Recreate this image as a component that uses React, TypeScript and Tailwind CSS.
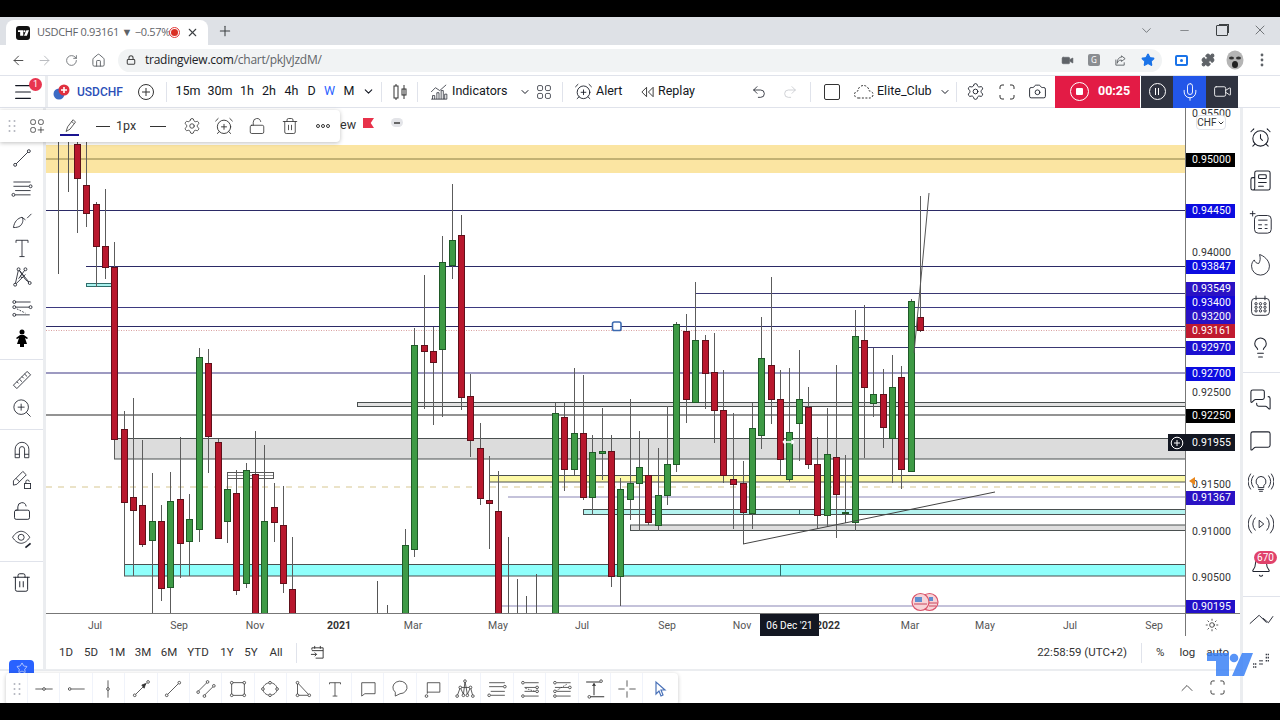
import type { ReactNode } from "react";
import {
  AlarmClock, AlarmClockPlus, ArrowLeft, ArrowRight, Camera, ChevronDown, ChevronUp, Home,
  Lightbulb, Lock, LockOpen, Menu, MessageSquare, MessagesSquare, Minus, Newspaper, Plus, Puzzle, Redo2,
  RotateCw, Settings, Star, Sun, Trash2, Undo2, Video, X, Mic, Bell,
} from "lucide-react";

const tvFont = "font-['Roboto','Liberation_Sans',sans-serif]";

// [x, wickTop, bodyTop, bodyBottom, wickBottom, colour]
type Candle = [number, number, number, number, number, "r" | "g"];
const candles: Candle[] = [
  [77, 140, 144, 178, 233, "r"], [86, 140, 185, 213, 227, "r"], [96, 202, 204, 246, 287, "r"], [105, 189, 246, 267, 279, "r"],
  [114, 242, 267, 439, 459, "r"], [124, 411, 429, 502, 576, "r"], [133, 398, 497, 510, 576, "r"], [142, 440, 505, 544, 547, "r"],
  [152, 473, 521, 540, 614, "g"], [161, 505, 521, 588, 601, "r"], [170, 472, 501, 587, 614, "g"], [180, 437, 499, 543, 578, "r"],
  [189, 494, 519, 541, 576, "g"], [199, 348, 357, 529, 542, "g"], [208, 349, 363, 436, 473, "r"], [218, 439, 442, 538, 538, "r"],
  [227, 473, 489, 521, 543, "g"], [236, 470, 493, 590, 595, "r"], [246, 463, 470, 583, 588, "g"], [255, 431, 474, 620, 620, "r"],
  [264, 445, 521, 620, 620, "g"], [274, 483, 507, 522, 542, "r"], [283, 486, 525, 583, 593, "r"], [292, 537, 589, 620, 620, "r"],
  [405, 529, 545, 620, 620, "g"], [414, 328, 345, 549, 557, "g"], [424, 275, 345, 351, 409, "r"], [433, 327, 351, 362, 425, "r"],
  [442, 236, 262, 349, 417, "g"], [452, 184, 240, 265, 279, "g"], [461, 215, 235, 397, 410, "r"], [470, 374, 396, 440, 457, "r"],
  [480, 423, 448, 498, 505, "r"], [489, 456, 500, 503, 549, "r"], [498, 471, 511, 620, 620, "r"], [555, 403, 413, 620, 620, "g"],
  [564, 403, 417, 469, 491, "r"], [574, 368, 433, 469, 475, "g"], [583, 375, 433, 497, 500, "r"], [592, 435, 452, 497, 515, "g"],
  [602, 408, 451, 453, 480, "g"], [611, 435, 451, 576, 587, "r"], [620, 478, 489, 576, 606, "g"], [630, 399, 483, 499, 520, "g"],
  [639, 431, 467, 483, 531, "g"], [648, 438, 475, 522, 525, "r"], [658, 448, 495, 525, 531, "g"], [667, 406, 464, 495, 505, "g"],
  [676, 322, 324, 464, 472, "g"], [686, 314, 331, 399, 423, "r"], [695, 282, 340, 402, 402, "g"], [705, 335, 340, 373, 409, "r"],
  [714, 333, 372, 410, 443, "r"], [723, 370, 410, 475, 483, "r"], [733, 413, 479, 484, 529, "r"], [743, 461, 483, 512, 544, "r"],
  [752, 403, 428, 513, 529, "g"], [761, 317, 358, 435, 449, "g"], [771, 277, 365, 399, 424, "r"], [780, 370, 399, 459, 476, "r"],
  [789, 368, 432, 479, 482, "g"], [799, 350, 399, 423, 461, "g"], [808, 387, 407, 464, 469, "r"], [817, 437, 464, 515, 529, "r"],
  [827, 408, 454, 515, 527, "g"], [836, 365, 457, 494, 538, "r"], [845, 455, 512, 513, 523, "g"], [855, 310, 336, 522, 531, "g"],
  [864, 305, 340, 387, 458, "r"], [873, 348, 394, 403, 417, "g"], [883, 369, 394, 427, 448, "r"], [892, 355, 387, 438, 483, "g"],
  [901, 366, 377, 469, 489, "r"], [911, 299, 301, 471, 472, "g"], [920, 196, 317, 330, 332, "r"],
];
const strayWicks: [number, number, number][] = [
  [58, 140, 274], [68, 140, 192], [377, 581, 614], [387, 605, 614], [508, 537, 614], [517, 579, 614], [526, 596, 614], [536, 574, 614],
];

// [y, x start, colour]
const levels: [number, number, string][] = [
  [210.5, 46, "#2b2a66"], [266.5, 86, "#2b2a66"], [293.5, 695, "#3a3872"], [307.5, 46, "#3d3a80"], [326.5, 46, "#2b2a66"],
  [347.5, 858, "#3a3872"], [373, 46, "#7d78ad"], [415, 46, "#6f6f6f"], [497, 508, "#8985b5"], [606, 498, "#8985b5"],
];

// [y, x start, bottom y, fill]
const bands: [number, number, number, string][] = [
  [402.5, 357, 406.5, "#e2e2e2"], [438.5, 114, 459, "#dcdcdc"], [475.5, 489, 482, "#fdf9a6"],
  [509.5, 583, 514.5, "#b4f3ef"], [525, 630, 530.5, "#dedede"], [564.5, 124, 576, "#8ffffb"],
];

function Chart() {
  return (
    <svg viewBox="46 108 1139 505" className="block w-[1139px] h-[505px]">
      <rect x="46" y="145" width="1139" height="28" fill="#fbe5a2" />
      <line x1="46" x2="1185" y1="159" y2="159" stroke="#8b7f45" />
      {bands.map(([y, x, bottom, fill]) => (
        <rect key={y} x={x + 0.5} y={y} width={1190 - x} height={bottom - y} fill={fill} stroke="#4a5050" strokeWidth="1" />
      ))}
      {levels.map(([y, x, c]) => (
        <line key={y} x1={x} x2="1185" y1={y} y2={y} stroke={c} strokeWidth={c === "#7d78ad" || c === "#6f6f6f" ? 1.4 : 1} />
      ))}
      <line x1="46" x2="1185" y1="330.5" y2="330.5" stroke="#d9a0a0" strokeDasharray="1 1.5" />
      <line x1="46" x2="1185" y1="487" y2="487" stroke="#d8c892" strokeWidth="1.2" strokeDasharray="6 6" />
      <rect x="86.5" y="283.5" width="25" height="3" fill="#a9f2ee" stroke="#2f6d6b" />
      <rect x="227.5" y="472.5" width="46" height="6" fill="#ffffff" stroke="#555555" />
      <line x1="227" x2="273" y1="475.5" y2="475.5" stroke="#999999" />
      <line x1="780.5" x2="780.5" y1="565" y2="576" stroke="#2f6d6b" />
      <line x1="799.5" x2="799.5" y1="510" y2="515" stroke="#2f6d6b" />
      <line x1="855.5" x2="855.5" y1="525" y2="531" stroke="#333333" />
      {strayWicks.map(([x, top, bottom]) => (
        <line key={x} x1={x + 0.5} x2={x + 0.5} y1={top} y2={bottom} stroke="#555555" />
      ))}
      {candles.map(([x, top, bodyTop, bodyBottom, bottom, c]) => (
        <g key={x}>
          <line x1={x + 0.5} x2={x + 0.5} y1={top} y2={bottom} stroke="#5c5c5c" />
          <rect
            x={x - 2.5}
            y={bodyTop + 0.5}
            width="6"
            height={bodyBottom - bodyTop}
            fill={c === "r" ? "#b8172d" : "#3e9a45"}
            stroke={c === "r" ? "#60101a" : "#1f5a27"}
          />
        </g>
      ))}
      <line x1="929" y1="193" x2="914" y2="353" stroke="#555555" />
      <line x1="743" y1="544" x2="995" y2="492" stroke="#444444" />
      <rect x="612.5" y="322" width="8.5" height="8.5" rx="1.8" fill="#ffffff" stroke="#3c6ab0" strokeWidth="1.6" />
      {/* crosshair cursor */}
      <path d="M783 442h11M783 442l2.5-2M783 442l2.5 2M794 442l-2.5-2M794 442l-2.5 2" stroke="#ffffff" strokeWidth="1.6" fill="none" />
      {/* event flags */}
      <circle cx="929.500" cy="602" r="8.500" fill="#f7d4d8" stroke="#d9536a" strokeWidth="1.2" />
      <circle cx="920.500" cy="602" r="8.500" fill="#f7d4d8" stroke="#d9536a" strokeWidth="1.2" />
      <rect x="915" y="597" width="7" height="5" fill="#5f8fd0" />
      <rect x="929" y="597" width="4" height="4" fill="#5f8fd0" />
      <path d="M914 604h13M929 603h8M929 606h7" stroke="#c9475c" strokeWidth="1.2" />
    </svg>
  );
}

// price labels sit on the axis at the price they mark
const prices: [number, string, string][] = [
  [113, "0.95500", "plain"], [159, "0.95000", "bg-black"], [210, "0.94450", "bg-[#0c0ce0]"], [252, "0.94000", "plain"],
  [266, "0.93847", "bg-[#0c0ce0]"], [288, "0.93549", "bg-[#2a12c4]"], [302, "0.93400", "bg-[#1408d8]"], [316, "0.93200", "bg-[#2a12c4]"],
  [330, "0.93161", "bg-[#c01a30]"], [347.5, "0.92970", "bg-[#1c10d0]"], [373, "0.92700", "bg-[#0c0ce0]"], [392, "0.92500", "plain"],
  [415, "0.92250", "bg-black"], [484, "0.91500", "plain"], [497, "0.91367", "bg-[#2a12c4]"], [531, "0.91000", "plain"],
  [577, "0.90500", "plain"], [606, "0.90195", "bg-[#2210c8]"],
];

function PriceAxis() {
  return (
    <div className="relative w-[55px] h-full border-l border-[#777777] text-[10.5px] tracking-[0.1px]">
      {prices.map(([y, text, bg]) => (
        <div
          key={text}
          style={{ top: y - 108 - 6.5 }}
          className={`absolute left-0 w-[49px] h-[14px] flex items-center justify-end pr-[4px] ${
            bg === "plain" ? "text-[#333333]" : `${bg} text-white`
          }`}
        >
          {text}
        </div>
      ))}
      <div className="absolute left-[-18px] top-[326px] w-[67px] h-[17px] bg-[#131722] text-white flex items-center justify-end pr-[4px]">
        <svg viewBox="0 0 14 14" className="absolute left-[2px] w-[14px] h-[14px]" fill="none" stroke="#ffffff">
          <circle cx="7" cy="7" r="5.8" />
          <path d="M7 4v6M4 7h6" />
        </svg>
        0.91955
      </div>
      <div className="absolute left-[3px] top-[369px] w-0 h-0 border-y-[4px] border-y-transparent border-r-[6px] border-r-[#e8861c]" />
      <div className="absolute left-[10px] top-[7px] w-[30px] h-[15px] bg-white border border-[#e0e3eb] rounded flex items-center justify-center text-[10px] text-[#333333]">
        CHF
        <ChevronDown size={8} strokeWidth={3} />
      </div>
    </div>
  );
}

const timeLabels: [number, string, boolean][] = [
  [95, "Jul", false], [179, "Sep", false], [255, "Nov", false], [339, "2021", true], [413, "Mar", false], [498, "May", false],
  [582, "Jul", false], [667, "Sep", false], [742, "Nov", false], [828, "2022", true], [910, "Mar", false], [985, "May", false],
  [1070, "Jul", false], [1154, "Sep", false],
];

function TimeAxis() {
  return (
    <div className="relative h-[23px] border-t border-[#777777] shrink-0 text-[10.5px] text-[#555555]">
      {timeLabels.map(([x, text, bold]) => (
        <span
          key={x}
          style={{ left: x - 46 }}
          className={`absolute top-[4px] -translate-x-1/2 ${bold ? "font-bold text-[#333333]" : ""}`}
        >
          {text}
        </span>
      ))}
      <div className="absolute left-[714px] top-0 w-[59px] h-[22px] bg-[#131722] text-white flex items-center justify-center text-[10px]">06 Dec '21</div>
      <div className="absolute left-[1139px] top-[-1px] w-px h-[23px] bg-[#777777]" />
      <Sun size={14} className="absolute left-[1159px] top-[4px] text-[#222222]" strokeWidth={1.3} />
    </div>
  );
}

function Ico({ children, size = 24 }: { children: ReactNode; size?: number }) {
  return (
    <svg viewBox="0 0 28 28" width={size} height={size} fill="none" stroke="currentColor" strokeWidth="1">
      {children}
    </svg>
  );
}

function Dots({ pts }: { pts: [number, number][] }) {
  return (
    <>
      {pts.map(([x, y]) => (
        <circle key={`${x}-${y}`} cx={x} cy={y} r="1.7" fill="#ffffff" />
      ))}
    </>
  );
}

const sideTools: [number, ReactNode][] = [
  [158, <Ico><path d="M7 21 21 7" /><Dots pts={[[6, 22], [22, 6]]} /></Ico>],
  [188, <Ico><path d="M4 7h20M4 12h18M6 17h18M6 22h18" /><Dots pts={[[24, 12], [4, 22]]} /></Ico>],
  [219, <Ico><path d="M4 24c1-7 5-11 10-12 2 3 1 7-2 10-2 1.500-5 2-8 2ZM14 12l4 3M20 13l5-5" /></Ico>],
  [248, <Ico><path d="M7 8V5h14v3M14 5v19M11 24h6" /></Ico>],
  [277, <Ico><path d="M6 23 10 5l8 12 5 4M6 23l12-12M10 5l13 16M10 16l8-11" /><Dots pts={[[6, 23], [10, 5], [18, 5], [23, 21], [14, 13]]} /></Ico>],
  [308, <Ico><path d="M5 7h19M7 13h18M5 22h18" /><path d="M8 15l10 5" strokeDasharray="2 1.500" /><Dots pts={[[5, 7], [24, 13], [5, 13], [5, 22]]} /></Ico>],
  [338, <svg viewBox="0 0 14 18" width="14" height="18" fill="#000000"><circle cx="7" cy="3" r="2.500" /><path d="M1 9l4-3h4l4 3-1 1-2-1 2 6H9v3H5v-3H2l2-6-2 1Z" /></svg>],
  [380, <Ico><path d="m4 20 16-16 4 4L8 24ZM8 16l2 2M11 13l3 3M14 10l2 2M17 7l3 3" /></Ico>],
  [408, <Ico><circle cx="13" cy="13" r="8.500" /><path d="M19 19l5 5M13 9v8M9 13h8" /></Ico>],
  [450, <Ico><path d="M6 23V13a8 8 0 0 1 16 0v10h-5V13a3 3 0 0 0-6 0v10ZM6 19h5M17 19h5" /></Ico>],
  [480, <Ico><path d="m4 15 11-11 4 4L8 19l-4 1ZM7 12l4 4" /><rect x="17" y="18" width="7" height="6" /><path d="M18.500 18v-2a2 2 0 0 1 4 0" /></Ico>],
  [511, <LockOpen size={20} strokeWidth={1.1} />],
  [539, <Ico><path d="M3 12c3-5 7-7 10-7s7 2 10 7c-3 5-7 7-10 7s-7-2-10-7Z" /><circle cx="13" cy="12" r="3.500" /><path d="m18 24 6-5" strokeWidth="2" /></Ico>],
  [582, <Trash2 size={21} strokeWidth={1.1} />],
];

function LeftToolbar() {
  return (
    <div className="relative w-[43px] h-full shrink-0 bg-white text-[#1e222d]">
      {sideTools.map(([y, icon]) => (
        <div key={y} style={{ top: y - 108 - 13 }} className="absolute left-0 w-[43px] h-[26px] flex items-center justify-center">
          {icon}
        </div>
      ))}
      <div className="absolute left-0 top-[251px] w-[43px] h-px bg-[#e0e3eb]" />
      <div className="absolute left-0 top-[321px] w-[43px] h-px bg-[#e0e3eb]" />
      <div className="absolute left-0 top-[453px] w-[43px] h-px bg-[#e0e3eb]" />
    </div>
  );
}

const drawTools: ReactNode[] = [
  <Ico size={22}><path d="M3 14h22" /><Dots pts={[[14, 14]]} /></Ico>,
  <Ico size={22}><path d="M8 14h17" /><Dots pts={[[6, 14]]} /></Ico>,
  <Ico size={22}><path d="M14 3v22" /><Dots pts={[[14, 14]]} /></Ico>,
  <Ico size={22}><path d="M7 21 21 7" /><path d="m15 9 5-2-2 6Z" fill="currentColor" /><Dots pts={[[6, 22], [23, 5]]} /></Ico>,
  <Ico size={22}><path d="M7 21 21 7" /><Dots pts={[[6, 22], [22, 6]]} /></Ico>,
  <Ico size={22}><path d="M4 17 15 6M12 22 23 11" /><Dots pts={[[4, 18], [16, 5], [12, 23], [24, 10]]} /></Ico>,
  <Ico size={22}><rect x="6" y="6" width="16" height="16" /><Dots pts={[[6, 6], [22, 6], [6, 22], [22, 22]]} /></Ico>,
  <Ico size={22}><path d="M14 6c5 0 9 4 9 8s-4 8-9 8-9-4-9-8 4-8 9-8Z" /><Dots pts={[[14, 6], [23, 14], [14, 22], [5, 14]]} /></Ico>,
  <Ico size={22}><path d="M7 6v16h15Z" /><Dots pts={[[7, 6], [7, 22], [22, 22]]} /></Ico>,
  <Ico size={22}><path d="M7 8V6h14v2M14 6v17M11 23h6" /></Ico>,
  <Ico size={22}><path d="M6 23V6h17v14H10Z" /></Ico>,
  <Ico size={22}><path d="M8 23v-5a9 8 0 1 1 6 2Z" /></Ico>,
  <Ico size={22}><path d="M8 20V6h16v12H8" /><Dots pts={[[7, 23]]} /></Ico>,
  <Ico size={22}><path d="M4 23 8 12l4 9 2-17 3 17 4-9 3 11M8 12l13 0" /><Dots pts={[[4, 23], [8, 12], [12, 22], [14, 4], [17, 22], [21, 12], [24, 23]]} /></Ico>,
  <Ico size={22}><path d="M4 6h20M4 11h18M6 17h18M6 22h18" /><Dots pts={[[24, 11], [4, 22]]} /></Ico>,
  <Ico size={22}><path d="M7 6h18M7 12h18M7 17h18M7 23h18" /><path d="m8 13 12 4" strokeDasharray="2 1.500" /><Dots pts={[[5, 6], [23, 12], [5, 23], [23, 17]]} /></Ico>,
  <Ico size={22}><path d="M7 6h18M5 12h18M7 17h18M7 23h18" /><path d="m20 8-13 8" strokeDasharray="2 1.500" /><Dots pts={[[5, 6], [24, 12], [5, 17], [5, 23]]} /></Ico>,
  <Ico size={22}><path d="M4 5h18M9 24h18M14 7v15" strokeWidth="1.300" /><path d="m12 10 2-3 2 3" fill="currentColor" /><Dots pts={[[23, 4], [8, 24]]} /></Ico>,
  <Ico size={22}><path d="M14 3v8M14 17v8M3 14h8M17 14h8" /></Ico>,
  <svg viewBox="0 0 18 18" width="18" height="18" fill="none" stroke="#4a72b8" strokeWidth="1.2"><path d="M5 2v12l3-3 2 5 2-1-2-5h4Z" /></svg>,
];

function DrawBar() {
  return (
    <div className="absolute left-[6px] top-[2px] w-[672px] h-[32px] bg-white rounded shadow-[0_1px_4px_rgba(0,0,0,0.22)] flex items-center text-[#333333] z-10">
      <div className="w-[22px] h-full flex items-center justify-center border-r border-[#f0f3fa]">
        <Grip />
      </div>
      {drawTools.map((icon, i) => (
        <div key={i} className="w-[32.4px] h-full shrink-0 flex items-center justify-center border-r border-[#f0f3fa] last:border-r-0">
          {icon}
        </div>
      ))}
    </div>
  );
}

function Grip() {
  return (
    <svg viewBox="0 0 8 14" width="8" height="14" fill="#b2b5be">
      <circle cx="1.500" cy="2" r="1" /><circle cx="6.500" cy="2" r="1" />
      <circle cx="1.500" cy="7" r="1" /><circle cx="6.500" cy="7" r="1" />
      <circle cx="1.500" cy="12" r="1" /><circle cx="6.500" cy="12" r="1" />
    </svg>
  );
}

function FloatingBar() {
  return (
    <div className="absolute left-0 top-[2px] w-[340px] h-[32px] bg-white rounded-r shadow-[0_1px_4px_rgba(0,0,0,0.25)] flex items-center text-[#333333] z-20 text-[12.5px]">
      <div className="w-[21px] flex justify-center pl-[2px]"><Grip /></div>
      <div className="w-[32px] flex justify-center">
        <Ico size={22}>
          <rect x="6" y="6" width="6" height="6" rx="2" /><rect x="16" y="6" width="6" height="6" rx="2" /><rect x="6" y="16" width="6" height="6" rx="2" />
          <path d="M19 15v8M15 19h8" />
        </Ico>
      </div>
      <div className="relative w-[33px] h-full flex items-center justify-center">
        <Ico size={22}><path d="m9 21 2-6 7-9 3 3-7 9-5 3ZM16 8l3 3" /></Ico>
        <div className="absolute left-[7px] bottom-[6px] w-[19px] h-[2px] bg-[#1a1490]" />
      </div>
      <div className="w-[56px] flex items-center gap-[6px] pl-[10px]">
        <div className="w-[14px] h-px bg-[#333333]" />
        1px
      </div>
      <div className="w-[32px] flex justify-center"><div className="w-[16px] h-px bg-[#333333]" /></div>
      <div className="w-[33px] flex justify-center pl-[2px]"><Settings size={18} strokeWidth={1.1} /></div>
      <div className="w-[33px] flex justify-center"><AlarmClockPlus size={20} strokeWidth={1.1} /></div>
      <div className="w-[33px] flex justify-center"><LockOpen size={18} strokeWidth={1.1} /></div>
      <div className="w-[33px] flex justify-center"><Trash2 size={18} strokeWidth={1.1} /></div>
      <div className="w-[33px] flex justify-center gap-[1px]">
        <span className="w-[4px] h-[4px] rounded-full border border-[#333333]" />
        <span className="w-[4px] h-[4px] rounded-full border border-[#333333]" />
        <span className="w-[4px] h-[4px] rounded-full border border-[#333333]" />
      </div>
    </div>
  );
}

const rightIcons: [number, ReactNode][] = [
  [98, <Ico size={26}><rect x="6" y="5" width="16" height="19" rx="4" /><path d="M10 10h8M10 13h8M10 16h8M10 19h8" /></Ico>],
  [137, <AlarmClock size={23} strokeWidth={1.1} />],
  [180, <Newspaper size={23} strokeWidth={1.1} />],
  [222, <Ico size={26}><rect x="7" y="7" width="18" height="19" rx="4" /><path d="M11 12h10M11 17h4M18 17h3M11 21h4M18 21h3M2 5h6M5 2v6" /></Ico>],
  [263, <Ico size={25}><path d="M13 4c4 1 11 6 11 13a10 10 0 1 1-20 0c0-3 1-5 3-7 1 3 3 4 5 4 2-3 2-6 1-10Z" /></Ico>],
  [305, <Ico size={25}><rect x="4" y="6" width="20" height="19" rx="4" /><path d="M9 3v5M19 3v5" /><circle cx="9" cy="12" r="1.300" /><circle cx="14" cy="12" r="1.300" /><circle cx="19" cy="12" r="1.300" /><circle cx="9" cy="16" r="1.300" /><circle cx="14" cy="16" r="1.300" /><circle cx="19" cy="16" r="1.300" /><circle cx="9" cy="20" r="1.300" /><circle cx="14" cy="20" r="1.300" /><circle cx="19" cy="20" r="1.300" /></Ico>],
  [347, <Lightbulb size={23} strokeWidth={1.1} />],
  [399, <MessagesSquare size={23} strokeWidth={1.1} />],
  [440, <MessageSquare size={23} strokeWidth={1.1} />],
  [482, <Ico size={26}><path d="M14 8a5.500 5.500 0 0 0-3 10v2h6v-2a5.500 5.500 0 0 0-3-10ZM11 22h6M12 24h4M6 7a11 11 0 0 0 0 13M3 5a14 14 0 0 0 0 17M22 7a11 11 0 0 1 0 13M25 5a14 14 0 0 1 0 17" /></Ico>],
  [524, <Ico size={26}><path d="m12 10 5 4-5 4ZM8 7a10 10 0 0 0 0 14M4 4a15 15 0 0 0 0 20M20 7a10 10 0 0 1 0 14M24 4a15 15 0 0 1 0 20" /></Ico>],
  [567, <Bell size={22} strokeWidth={1.1} />],
  [619, <Ico size={26}><path d="M2 19 12 10l8 8M16 13l6 5 5-7" /></Ico>],
  [660, <Ico size={22}><path d="M4 19h4M4 23h4M12 15h4M12 19h4M20 7h5M20 11h5M20 15h5" strokeWidth="2" strokeDasharray="1.500 1" /></Ico>],
];

function RightBar() {
  return (
    <div className="relative w-[37px] h-full shrink-0 bg-white text-[#1e222d]">
      {rightIcons.map(([y, icon]) => (
        <div key={y} style={{ top: y - 108 - 13 }} className="absolute left-0 w-[35px] h-[26px] flex items-center justify-center">
          {icon}
        </div>
      ))}
      <div className="absolute left-0 top-[264px] w-[37px] h-px bg-[#e0e3eb]" />
      <div className="absolute left-0 top-[488px] w-[37px] h-px bg-[#e0e3eb]" />
      <div className="absolute left-[11px] top-[443px] w-[23px] h-[13px] rounded-full bg-[#e0426b] text-white text-[10px] flex items-center justify-center">670</div>
    </div>
  );
}

function Tf({ w, active, children }: { w: string; active?: boolean; children: ReactNode }) {
  return <div className={`${w} shrink-0 flex justify-center ${active ? "text-[#2962ff]" : ""}`}>{children}</div>;
}

function Divider({ ml = "" }: { ml?: string }) {
  return <div className={`${ml} w-px h-[20px] shrink-0 bg-[#e0e3eb]`} />;
}

function TopBar() {
  return (
    <div className={`relative z-10 h-[33px] shrink-0 flex items-center bg-white border-y border-[#e0e3eb] text-[12.5px] text-[#131722] ${tvFont}`}>
      <div className="relative w-[45px] h-full shrink-0 flex items-center justify-center">
        <Menu size={22} strokeWidth={1.3} />
        <span className="absolute left-[29px] top-[2px] w-[13px] h-[13px] rounded-full bg-[#e8354f] text-white text-[9px] flex items-center justify-center">1</span>
      </div>
      <div className="w-[3px] h-full shrink-0 bg-[#ebedf0]" />
      <div className="w-[82px] shrink-0 flex items-center gap-[6px] pl-[5px] font-medium text-[12px] text-[#2c4fb8]">
        <svg viewBox="0 0 18 16" width="18" height="16">
          <circle cx="6" cy="10" r="5.500" fill="#3d6bc4" />
          <circle cx="11" cy="6" r="5.500" fill="#e0303f" />
          <path d="M11 3v6M8 6h6" stroke="#ffffff" strokeWidth="1.600" />
        </svg>
        USDCHF
      </div>
      <div className="w-[32px] shrink-0 flex justify-center">
        <svg viewBox="0 0 18 18" width="18" height="18" fill="none" stroke="#333333"><circle cx="9" cy="9" r="7.500" /><path d="M9 5v8M5 9h8" /></svg>
      </div>
      <Divider ml="ml-[4px]" />
      <div className="ml-[5px] flex items-center">
        <Tf w="w-[32px]">15m</Tf>
        <Tf w="w-[32px]">30m</Tf>
        <Tf w="w-[22px]">1h</Tf>
        <Tf w="w-[22px]">2h</Tf>
        <Tf w="w-[23px]">4h</Tf>
        <Tf w="w-[17px]">D</Tf>
        <Tf w="w-[19px]" active>W</Tf>
        <Tf w="w-[20px]">M</Tf>
        <Tf w="w-[18px]"><ChevronDown size={13} /></Tf>
      </div>
      <Divider ml="ml-[4px]" />
      <div className="w-[35px] shrink-0 flex justify-center">
        <svg viewBox="0 0 18 18" width="18" height="18" fill="none" stroke="#333333"><rect x="3" y="3" width="4" height="12" /><path d="M5 1v2M5 15v2M13 2v14" /><rect x="11" y="6" width="4" height="6" /></svg>
      </div>
      <Divider />
      <div className="w-[113px] shrink-0 flex items-center pl-[11px]">
        <Ico size={20}><path d="M3 24h22M5 24v-5h3v5M11 24v-9h3v9M17 24V12h3v12M22 24v-7h3v7M3 14l6-6 6 4 9-8" /></Ico>
        <span className="ml-[3px]">Indicators</span>
        <ChevronDown size={12} className="ml-[11px]" />
      </div>
      <div className="w-[26px] shrink-0 flex justify-center">
        <Ico size={20}><rect x="5" y="5" width="7" height="7" rx="2" /><rect x="16" y="5" width="7" height="7" rx="2" /><rect x="5" y="16" width="7" height="7" rx="2" /><rect x="16" y="16" width="7" height="7" rx="2" /></Ico>
      </div>
      <Divider ml="ml-[5px]" />
      <div className="w-[67px] shrink-0 flex items-center pl-[11px] gap-[3px]">
        <AlarmClockPlus size={19} strokeWidth={1.1} />
        Alert
      </div>
      <div className="w-[70px] shrink-0 flex items-center pl-[10px] gap-[3px]">
        <svg viewBox="0 0 16 14" width="15" height="14" fill="none" stroke="#333333"><path d="M7 2 2 7l5 5ZM14 2 9 7l5 5Z" /></svg>
        Replay
      </div>
      <div className="w-[44px] shrink-0" />
      <div className="w-[30px] shrink-0 flex justify-center"><Undo2 size={16} strokeWidth={1.2} /></div>
      <div className="w-[31px] shrink-0 flex justify-center text-[#c4c6cc]"><Redo2 size={16} strokeWidth={1.2} /></div>
      <Divider ml="ml-[5px]" />
      <div className="w-[41px] shrink-0 flex justify-center"><div className="w-[16px] h-[16px] border border-[#333333] rounded-[2px]" /></div>
      <div className="w-[104px] shrink-0 flex items-center pl-[2px]">
        <svg viewBox="0 0 20 16" width="20" height="16" fill="none" stroke="#333333" strokeDasharray="2 1.500"><path d="M5 14H4a3.500 3.500 0 0 1 0-7 5.500 5.500 0 0 1 11 0 3.500 3.500 0 0 1 1 7Z" /></svg>
        <span className="ml-[3px]">Elite_Club</span>
        <ChevronDown size={12} className="ml-[7px]" />
      </div>
      <Divider />
      <div className="w-[36px] shrink-0 flex justify-center"><Settings size={19} strokeWidth={1.1} /></div>
      <div className="w-[28px] shrink-0 flex justify-center">
        <svg viewBox="0 0 16 16" width="16" height="16" fill="none" stroke="#333333"><path d="M1 5V3a2 2 0 0 1 2-2h2M11 1h2a2 2 0 0 1 2 2v2M15 11v2a2 2 0 0 1-2 2h-2M5 15H3a2 2 0 0 1-2-2v-2" /></svg>
      </div>
      <div className="w-[33px] shrink-0 flex justify-center"><Camera size={19} strokeWidth={1.1} /></div>
      <div className="ml-px w-[85px] h-[32px] shrink-0 bg-[#e31b45] text-white flex items-center pl-[15px] gap-[9px] font-bold text-[12.5px]">
        <div className="w-[19px] h-[19px] rounded-full border border-white flex items-center justify-center"><div className="w-[7px] h-[7px] bg-white rounded-[1px]" /></div>
        00:25
      </div>
      <div className="w-[32px] h-[32px] shrink-0 ml-px bg-[#2f3340] flex items-center justify-center">
        <div className="w-[17px] h-[17px] rounded-full border border-white flex items-center justify-center gap-[2px]"><div className="w-px h-[7px] bg-white" /><div className="w-px h-[7px] bg-white" /></div>
      </div>
      <div className="w-[33px] h-[32px] shrink-0 bg-[#2256e8] flex items-center justify-center text-white"><Mic size={20} strokeWidth={1.1} /></div>
      <div className="w-[32px] h-[32px] shrink-0 bg-[#2f3340] flex items-center justify-center text-white"><Video size={19} strokeWidth={1.1} /></div>
    </div>
  );
}

function ChromeBars() {
  return (
    <>
      <div className="h-[17px] shrink-0 bg-black" />
      <div className="relative h-[28px] shrink-0 bg-[#dee1e6] flex items-end pl-[6px] text-[#3c4043] font-['Open_Sans',sans-serif]">
        <div className="w-[202px] h-[25px] bg-white rounded-t-lg flex items-center pl-[10px] text-[11px] tracking-[-0.3px]">
          <div className="w-[14px] h-[14px] shrink-0 rounded-[3px] bg-[#111111] flex items-center justify-center">
            <svg viewBox="0 0 46 24" width="11" height="6" fill="#ffffff"><path d="M0 0h22v23H9V8H0ZM35 0h11l-9 23H25Z" /><circle cx="27" cy="5" r="4.300" /></svg>
          </div>
          <span className="ml-[7px] w-[122px] shrink-0 whitespace-nowrap text-[#5f6368]">USDCHF 0.93161 ▼ −0.57%</span>
          <div className="ml-[10px] w-[11px] h-[11px] shrink-0 rounded-full border border-[#e33b3b] flex items-center justify-center"><div className="w-[7px] h-[7px] rounded-full bg-[#d93025]" /></div>
          <X size={13} className="ml-[6px] shrink-0 text-[#3c4043]" />
        </div>
        <Plus size={16} strokeWidth={1.6} className="ml-[9px] mb-[6px] text-[#3c4043]" />
        <div className="ml-auto flex items-center pb-[7px] text-[#3c4043]">
          <ChevronDown size={15} strokeWidth={1} />
          <div className="ml-[23px] w-[15px] flex justify-center"><Minus size={13} strokeWidth={1} /></div>
          <div className="ml-[24px] w-[12px] h-[11px] border border-[#3c4043] rounded-[1px] shadow-[2px_-2px_0_-1px_#3c4043]" />
          <X size={16} strokeWidth={1} className="ml-[24px] mr-[12px]" />
        </div>
      </div>
      <div className="h-[30px] shrink-0 bg-white flex items-center text-[#5f6368]">
        <ArrowLeft size={15} strokeWidth={1.5} className="ml-[11px] text-[#444444]" />
        <ArrowRight size={15} strokeWidth={1.5} className="ml-[11px] text-[#b5b8bc]" />
        <RotateCw size={13} strokeWidth={1.5} className="ml-[13px]" />
        <Home size={15} strokeWidth={1.5} className="ml-[13px]" />
        <div className="ml-[12px] w-[1044px] h-[23px] rounded-full bg-[#f1f3f4] flex items-center pl-[8px]">
          <Lock size={10} strokeWidth={2.5} className="text-[#444444]" />
          <span className="ml-[9px] text-[12px] tracking-[-0.25px] font-['Open_Sans',sans-serif] text-[#5f6368]">
            <span className="text-[#202124]">tradingview.com</span>/chart/pkJvJzdM/
          </span>
          <div className="ml-auto flex items-center gap-[14px] pr-[7px]">
            <Video size={13} fill="#5f6368" strokeWidth={1} />
            <div className="w-[12px] h-[12px] bg-[#8a8d91] rounded-[2px] text-[8px] text-white flex items-center justify-center">G</div>
            <svg viewBox="0 0 14 14" width="13" height="13" fill="none" stroke="#5f6368"><path d="M2 6v6h9V9M8 2l4 3-4 3V6.500C5 6.500 4 8 3.500 10 3.500 6 5 3.500 8 3.500Z" /></svg>
            <Star size={14} fill="#1a73e8" className="text-[#1a73e8]" />
          </div>
        </div>
        <div className="ml-[13px] w-[13px] h-[11px] rounded-[2px] border-2 border-[#1a73e8] flex items-center justify-center"><div className="w-[3px] h-[3px] rounded-full bg-[#1a73e8]" /></div>
        <Puzzle size={14} fill="#5f6368" className="ml-[13px]" />
        <svg viewBox="0 0 18 20" width="18" height="20" className="ml-[11px]">
          <ellipse cx="9" cy="10" rx="8.500" ry="9.500" fill="#b5b5b5" />
          <ellipse cx="5.500" cy="8" rx="2.500" ry="1.600" fill="#333333" />
          <ellipse cx="12.500" cy="8" rx="2.500" ry="1.600" fill="#333333" />
          <ellipse cx="9" cy="14.500" rx="3" ry="3.500" fill="#222222" />
        </svg>
        <svg viewBox="0 0 4 14" width="4" height="14" fill="#5f6368" className="ml-[16px]"><circle cx="2" cy="2" r="1.400" /><circle cx="2" cy="7" r="1.400" /><circle cx="2" cy="12" r="1.400" /></svg>
      </div>
    </>
  );
}

export default function App() {
  return (
    <div className="relative w-[1280px] h-[720px] overflow-hidden flex flex-col bg-white">
      <ChromeBars />
      <TopBar />
      <div className={`relative flex-1 min-h-0 flex text-[#131722] ${tvFont}`}>
        <div className="w-[1240px] shrink-0 flex flex-col">
          <div className="flex-1 min-h-0 flex">
            <LeftToolbar />
            <div className="w-[3px] shrink-0 bg-[#ebedf0]" />
            <div className="flex-1 min-w-0 flex flex-col">
              <div className="relative flex h-[505px] shrink-0">
                <div className="relative w-[1139px] shrink-0 overflow-hidden">
                  <Chart />
                  <span className="absolute left-[294px] top-[8px] text-[12.5px] text-[#333333] bg-white">ew</span>
                  <div className="absolute left-[317px] top-[10px] w-[11px] h-[10px] bg-[#e8324a] [clip-path:polygon(0_0,100%_0,70%_50%,100%_100%,0_100%)]" />
                  <div className="absolute left-[345px] top-[10px] w-[12px] h-[9px] rounded-full bg-[#e3e4e8] flex items-center justify-center"><div className="w-[6px] h-[2px] bg-[#666666]" /></div>
                </div>
                <PriceAxis />
              </div>
              <TimeAxis />
              <div className="h-[33px] shrink-0 flex items-center text-[11.5px] text-[#333333]">
                <div className="ml-[7px] flex items-center">
                  <Tf w="w-[26px]">1D</Tf>
                  <Tf w="w-[24px]">5D</Tf>
                  <Tf w="w-[28px]">1M</Tf>
                  <Tf w="w-[24px]">3M</Tf>
                  <Tf w="w-[28px]">6M</Tf>
                  <Tf w="w-[30px]">YTD</Tf>
                  <Tf w="w-[28px]">1Y</Tf>
                  <Tf w="w-[20px]">5Y</Tf>
                  <Tf w="w-[30px]">All</Tf>
                </div>
                <Divider ml="ml-[5px]" />
                <svg viewBox="0 0 16 16" width="15" height="15" fill="none" stroke="#333333" className="ml-[13px]"><path d="M2 5V3h12v11H6M2 6h12M5 1v3M11 1v3M1 10h6M5 8l2 2-2 2" /></svg>
                <span className="ml-auto mr-[14px]">22:58:59 (UTC+2)</span>
                <Divider />
                <span className="ml-[14px]">%</span>
                <span className="ml-[15px]">log</span>
                <span className="ml-[11px] mr-[11px]">auto</span>
              </div>
            </div>
          </div>
          <div className="h-[2px] shrink-0 bg-[#ebedf0]" />
          <div className="relative h-[32px] shrink-0 bg-white">
            <DrawBar />
            <ChevronUp size={20} strokeWidth={1} className="absolute left-[1177px] top-[7px] text-[#333333]" />
            <svg viewBox="0 0 16 16" width="15" height="15" fill="none" stroke="#333333" className="absolute left-[1210px] top-[9px]"><path d="M1 5V3a2 2 0 0 1 2-2h2M11 1h2a2 2 0 0 1 2 2v2M15 11v2a2 2 0 0 1-2 2h-2M5 15H3a2 2 0 0 1-2-2v-2" /></svg>
          </div>
        </div>
        <div className="w-[3px] shrink-0 bg-[#ebedf0]" />
        <RightBar />
        <FloatingBar />
        <div className="absolute left-[9px] top-[552px] w-[25px] h-[14px] rounded-t bg-[#2962ff] flex justify-center pt-[2px] z-0"><Star size={12} className="text-white" strokeWidth={1.2} /></div>
      </div>
      <div className="h-[17px] shrink-0 bg-black relative z-10" />
      <svg viewBox="0 0 46 24" className="absolute left-[1207px] top-[653px] w-[46px] h-[24px] opacity-85" fill="#3b82f6">
        <path d="M0 0h22v23H9V8H0ZM35 0h11l-9 23H25Z" />
        <circle cx="27" cy="5" r="4.300" />
      </svg>
    </div>
  );
}
